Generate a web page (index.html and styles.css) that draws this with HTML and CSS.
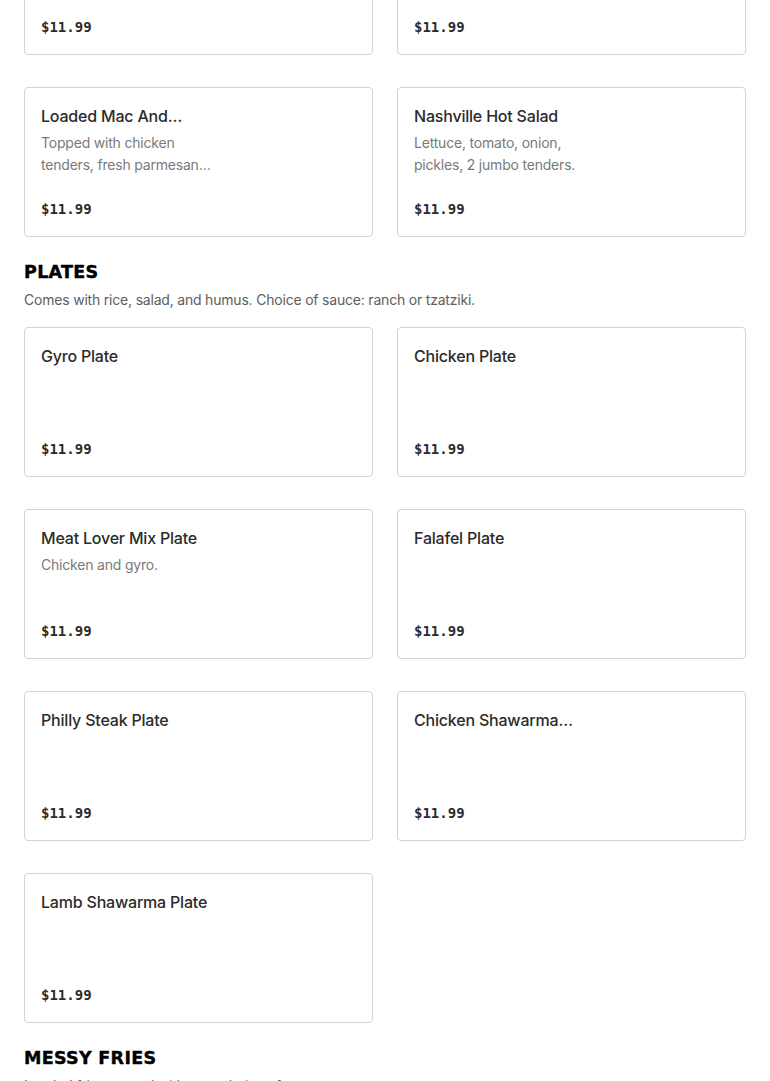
FILE: index.html
```html
<!DOCTYPE html>
<html lang="en">
<head>
<meta charset="utf-8">
<title>Menu</title>
<link rel="stylesheet" href="styles.css">
</head>
<body>
<main class="menu">
  <section class="section section-first">
    <div class="grid">
      <article class="card">
        <div class="card-text">
          <h3 class="card-title">Chicken Caesar Salad</h3>
          <p class="card-desc">Romaine, parmesan, croutons, caesar dressing.</p>
        </div>
        <div class="price">$11.99</div>
      </article>
      <article class="card">
        <div class="card-text">
          <h3 class="card-title">Buffalo Salad</h3>
          <p class="card-desc">Lettuce, tomato, onion, buffalo tenders.</p>
        </div>
        <div class="price">$11.99</div>
      </article>
      <article class="card">
        <div class="card-text">
          <h3 class="card-title">Loaded Mac And Cheese</h3>
          <p class="card-desc">Topped with chicken tenders, fresh parmesan cheese and sauce.</p>
        </div>
        <div class="price">$11.99</div>
      </article>
      <article class="card">
        <div class="card-text">
          <h3 class="card-title">Nashville Hot Salad</h3>
          <p class="card-desc">Lettuce, tomato, onion, pickles, 2 jumbo tenders.</p>
        </div>
        <div class="price">$11.99</div>
      </article>
    </div>
  </section>

  <section class="section">
    <h2 class="section-title">Plates</h2>
    <p class="section-desc">Comes with rice, salad, and humus. Choice of sauce: ranch or tzatziki.</p>
    <div class="grid">
      <article class="card">
        <div class="card-text"><h3 class="card-title">Gyro Plate</h3></div>
        <div class="price">$11.99</div>
      </article>
      <article class="card">
        <div class="card-text"><h3 class="card-title">Chicken Plate</h3></div>
        <div class="price">$11.99</div>
      </article>
      <article class="card">
        <div class="card-text">
          <h3 class="card-title">Meat Lover Mix Plate</h3>
          <p class="card-desc">Chicken and gyro.</p>
        </div>
        <div class="price">$11.99</div>
      </article>
      <article class="card">
        <div class="card-text"><h3 class="card-title">Falafel Plate</h3></div>
        <div class="price">$11.99</div>
      </article>
      <article class="card">
        <div class="card-text"><h3 class="card-title">Philly Steak Plate</h3></div>
        <div class="price">$11.99</div>
      </article>
      <article class="card">
        <div class="card-text"><h3 class="card-title">Chicken Shawarma Plate</h3></div>
        <div class="price">$11.99</div>
      </article>
      <article class="card">
        <div class="card-text"><h3 class="card-title">Lamb Shawarma Plate</h3></div>
        <div class="price">$11.99</div>
      </article>
    </div>
  </section>

  <section class="section">
    <h2 class="section-title">Messy Fries</h2>
    <p class="section-desc">Loaded fries topped with your choice of meat.</p>
  </section>
</main>
</body>
</html>
```

FILE: styles.css
```css
* {
  box-sizing: border-box;
}

html, body {
  margin: 0;
  padding: 0;
  background: #ffffff;
}

body {
  font-family: Inter, "Noto Sans", "Liberation Sans", sans-serif;
  color: #2d2d2d;
  overflow: hidden;
}

.menu {
  padding: 0 24px;
}

.section {
  margin-top: 22px;
}

.section-first {
  margin-top: -95px;
}

.section-title {
  margin: 0;
  font-family: "DejaVu Sans", sans-serif;
  font-weight: 700;
  font-size: 17.5px;
  line-height: 26px;
  text-transform: uppercase;
  color: #000000;
  letter-spacing: 0.3px;
  -webkit-text-stroke: 0.4px #000;
}

.section-desc {
  margin: 4px 0 0;
  font-size: 14px;
  line-height: 22px;
  letter-spacing: -0.2px;
  color: #5e5e5e;
}

.section-desc + .grid {
  margin-top: 16px;
}

.grid {
  display: grid;
  grid-template-columns: 1fr 1fr;
  column-gap: 24px;
  row-gap: 32px;
}

.card {
  height: 150px;
  border: 1px solid #d3d3d3;
  border-radius: 4px;
  padding: 16px 16px 15px;
  display: flex;
  flex-direction: column;
  background: #fff;
}

.card-text {
  width: 178px;
}

.card-title {
  margin: 0;
  font-size: 16px;
  font-weight: 500;
  line-height: 24px;
  letter-spacing: -0.2px;
  color: #2b2b2b;
  display: -webkit-box;
  -webkit-box-orient: vertical;
  -webkit-line-clamp: 1;
  overflow: hidden;
}

.card-desc {
  margin: 4px 0 0;
  font-size: 14px;
  line-height: 22px;
  letter-spacing: -0.2px;
  color: #7a7a7a;
  display: -webkit-box;
  -webkit-box-orient: vertical;
  -webkit-line-clamp: 2;
  overflow: hidden;
}

.price {
  margin-top: auto;
  font-family: "DejaVu Sans Mono", "Liberation Mono", monospace;
  font-size: 14px;
  font-weight: 700;
  line-height: 24px;
  color: #2b2b2b;
}
```
